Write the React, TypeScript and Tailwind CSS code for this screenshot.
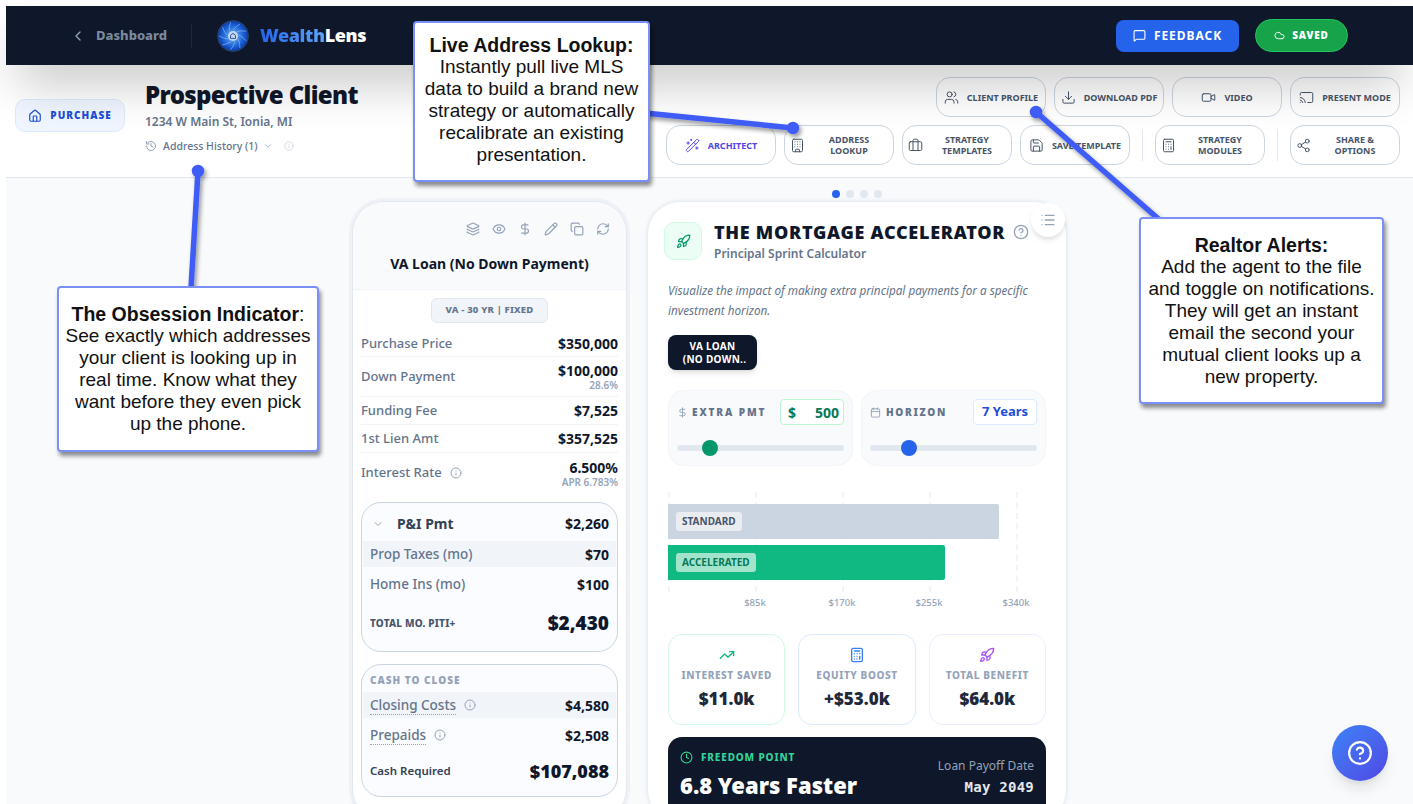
import React from "react";
import {
  ChevronLeft, MessageSquare, Cloud, Home, History, ChevronDown, Info, Users, Download, Video, Cast,
  WandSparkles, Building, Briefcase, Save, Calculator, Share2, Layers, Eye, DollarSign, Pencil, Copy,
  RefreshCw, Rocket, CircleHelp, List, Calendar, TrendingUp, Clock,
} from "lucide-react";

const Logo = () => {
  const blades = Array.from({ length: 9 }, (_, i) => i * 40);
  return (
    <svg width="32" height="32" viewBox="0 0 32 32">
      <defs>
        <radialGradient id="lg" cx="50%" cy="50%" r="50%">
          <stop offset="0%" stopColor="#b5d0f0" />
          <stop offset="40%" stopColor="#3d86e4" />
          <stop offset="75%" stopColor="#1658d0" />
          <stop offset="100%" stopColor="#0e3a94" />
        </radialGradient>
      </defs>
      <circle cx="16" cy="16" r="15.5" fill="url(#lg)" stroke="#33415f" strokeWidth="0.8" />
      {blades.map((a) => (
        <path key={a} d="M16 10 Q19 6 23 4" fill="none" stroke="#8fbcf0" strokeOpacity="0.7" strokeWidth="0.9" transform={`rotate(${a} 16 16)`} />
      ))}
      <circle cx="16" cy="16" r="5" fill="#c3d6ec" />
      <path d="M13.5 18.4v-3l2.5-2 2.5 2v3z" fill="none" stroke="#2a5aa8" strokeWidth="1" />
    </svg>
  );
};

const TopBtn = ({ icon: I, children, active, split }: any) => (
  <button className={`flex h-[40px] w-[110px] shrink-0 items-center whitespace-nowrap rounded-[14px] border border-[#cbd5e1] bg-white/40 text-[9px] font-bold leading-[11px] ${active ? "text-[#4f46e5]" : "text-[#475569]"} ${split ? "px-[5px]" : "justify-center gap-[8px]"}`}>
    <I size={15} strokeWidth={1.6} className="shrink-0" />
    <span className={split ? "flex-1 pl-[5px] text-center" : ""}>{children}</span>
  </button>
);

const Row = ({ label, value, sub, info, cls }: any) => (
  <div className={`flex items-center justify-between border-b border-[#f1f5f9] ${cls}`}>
    <span className="flex items-center gap-[8px] text-[13px] font-medium text-[#64748b]">
      {label}
      {info && <Info size={12} className="text-[#94a3b8]" />}
    </span>
    <span className="flex flex-col items-end">
      <span className="text-[14px] font-bold leading-[18px] text-[#0f172a]">{value}</span>
      {sub && <span className="text-[10px] font-semibold leading-[11px] text-[#94a3b8]">{sub}</span>}
    </span>
  </div>
);

const SubRow = ({ label, value, hl, info, dotted }: any) => (
  <div className={`mx-[1px] flex h-[26px] items-center justify-between px-[7px] ${hl ? "bg-[#f1f5f9]" : ""}`}>
    <span className="flex items-center gap-[8px] text-[13.5px] font-medium text-[#64748b]">
      <span className={dotted ? "border-b border-dotted border-[#94a3b8] leading-[18px]" : ""}>{label}</span>
      {info && <Info size={12} className="text-[#94a3b8]" />}
    </span>
    <span className="text-[14px] font-bold text-[#0f172a]">{value}</span>
  </div>
);

const Stat = ({ icon: I, color, border, label, value }: any) => (
  <div className={`flex h-[91px] flex-col items-center rounded-[14px] border bg-white pt-[12px] ${border}`}>
    <I size={16} className={color} />
    <div className="mt-[5px] whitespace-nowrap text-[10px] font-extrabold leading-[14px] tracking-[0.06em] text-[#94a3b8]">{label}</div>
    <div className="mt-[5px] text-[17px] font-black leading-[24px] text-[#1e293b]">{value}</div>
  </div>
);

const Callout = ({ cls, title, colon, lines }: any) => (
  <div className={`absolute z-30 flex flex-col items-center justify-center rounded-[4px] border-2 border-[#7b90f7] bg-white text-center text-[19px] leading-[22px] text-[#111] shadow-[2px_4px_4px_rgba(0,0,0,0.45)] [font-family:'Liberation_Sans',Arial,sans-serif] ${cls}`}>
    <div className="whitespace-nowrap text-[19.5px]"><b>{title}</b>{colon}</div>
    {lines.map((l: string) => <div key={l} className="whitespace-nowrap">{l}</div>)}
  </div>
);

const Slider = ({ thumb, left }: any) => (
  <div className="relative mt-[20px] h-[6px] rounded-full bg-[#e2e8f0]">
    <div className={`absolute top-[-5px] h-[16px] w-[16px] rounded-full ${thumb} ${left}`} />
  </div>
);

export default function App() {
  return (
    <div className="relative h-[804px] w-[1413px] overflow-hidden bg-white pl-[6px] pt-[6px] [font-family:'Noto_Sans',sans-serif]">
      <div className="flex h-[798px] flex-col bg-[#f8fafc]">
        <header className="relative z-10 flex h-[59px] shrink-0 items-center justify-between bg-[#0f172a] pl-[64px] pr-[65px] shadow-[0_25px_50px_-12px_rgba(0,0,0,0.3)]">
          <div className="flex items-center">
            <ChevronLeft size={16} className="text-[#94a3b8]" />
            <span className="ml-[10px] text-[13px] font-extrabold text-[#7b899d]">Dashboard</span>
            <div className="ml-[24px] h-[24px] w-px bg-[#1e293b]" />
            <div className="ml-[25px]"><Logo /></div>
            <span className="ml-[11px] text-[18px] font-black tracking-[-0.02em]">
              <span className="bg-gradient-to-r from-[#2563eb] to-[#60a5fa] bg-clip-text text-transparent">Wealth</span>
              <span className="text-white">Lens</span>
            </span>
          </div>
          <div className="flex items-center gap-[16px]">
            <button className="flex h-[32px] w-[123px] items-center justify-center gap-[8px] rounded-[8px] bg-[#2563eb] text-[12px] font-bold tracking-[0.08em] text-white">
              <MessageSquare size={13} /> FEEDBACK
            </button>
            <button className="flex h-[33px] w-[93px] items-center justify-center gap-[7px] rounded-full border border-[#22c55e] bg-[#16a34a] text-[10px] font-black tracking-[0.08em] text-white">
              <Cloud size={11} /> SAVED
            </button>
          </div>
        </header>

        <div className="flex h-[113px] shrink-0 justify-between border-b border-[#e2e8f0] bg-white pl-[9px] pr-[13px]">
          <div className="flex items-start">
            <div className="mt-[34px] flex h-[33px] w-[110px] items-center justify-center gap-[8px] rounded-[10px] border border-[#dbeafe] bg-[#eff6ff] text-[10px] font-black tracking-[0.1em] text-[#1d4ed8]">
              <Home size={14} /> PURCHASE
            </div>
            <div className="ml-[20px] pt-[13px]">
              <div className="text-[24px] font-black leading-[33px] tracking-[-0.027em] text-[#0f172a]">Prospective Client</div>
              <div className="mt-[3px] text-[12px] font-semibold leading-[16px] text-[#64748b]">1234 W Main St, Ionia, MI</div>
              <div className="mt-[8px] flex items-center text-[10.5px] font-medium leading-[16px] text-[#64748b]">
                <History size={12} className="text-[#94a3b8]" />
                <span className="ml-[6px]">Address History (1)</span>
                <ChevronDown size={10} className="ml-[5px] text-[#94a3b8]" />
                <Info size={10} className="ml-[11px] text-[#cbd5e1]" />
              </div>
            </div>
          </div>
          <div className="flex flex-col items-end gap-[8px] pt-[12px]">
            <div className="flex gap-[8px]">
              <TopBtn icon={Users}>CLIENT PROFILE</TopBtn>
              <TopBtn icon={Download}>DOWNLOAD PDF</TopBtn>
              <TopBtn icon={Video}>VIDEO</TopBtn>
              <TopBtn icon={Cast}>PRESENT MODE</TopBtn>
            </div>
            <div className="flex items-center gap-[8px]">
              <TopBtn icon={WandSparkles} active>ARCHITECT</TopBtn>
              <TopBtn icon={Building} split>ADDRESS<br />LOOKUP</TopBtn>
              <TopBtn icon={Briefcase} split>STRATEGY<br />TEMPLATES</TopBtn>
              <TopBtn icon={Save}>SAVE TEMPLATE</TopBtn>
              <div className="mx-[4px] h-[32px] w-px bg-[#e2e8f0]" />
              <TopBtn icon={Calculator} split>STRATEGY<br />MODULES</TopBtn>
              <div className="mx-[4px] h-[32px] w-px bg-[#e2e8f0]" />
              <TopBtn icon={Share2} split>SHARE &amp;<br />OPTIONS</TopBtn>
            </div>
          </div>
        </div>

        <main className="flex min-h-0 flex-1 items-start gap-[21px] overflow-hidden pl-[346px] pt-[23px]">
          <section className="h-[620px] w-[275px] shrink-0 rounded-[32px] border border-[#e2e8f0] bg-white shadow-[0_0_0_3px_#eef2f7]">
            <div className="h-[88px] rounded-t-[32px] border-b border-[#f1f5f9] bg-[#f8fafc] pt-[20px]">
              <div className="flex justify-end gap-[12px] pr-[16px] text-[#94a3b8]">
                {[Layers, Eye, DollarSign, Pencil, Copy, RefreshCw].map((I, i) => <I key={i} size={14} />)}
              </div>
              <div className="mt-[18px] text-center text-[14px] font-bold leading-[20px] text-[#0f172a]">VA Loan (No Down Payment)</div>
            </div>
            <div className="px-[8px]">
              <div className="mx-auto mt-[8px] flex h-[25px] w-[117px] items-center justify-center rounded-[6px] border border-[#e2e8f0] bg-[#f1f5f9] text-[9.5px] font-extrabold tracking-[0.02em] text-[#64748b]">VA - 30 YR | FIXED</div>
              <div className="mt-[8px]">
                <Row label="Purchase Price" value="$350,000" cls="h-[26px]" />
                <Row label="Down Payment" value="$100,000" sub="28.6%" cls="h-[40px]" />
                <Row label="Funding Fee" value="$7,525" cls="h-[28px]" />
                <Row label="1st Lien Amt" value="$357,525" cls="h-[28px]" />
                <Row label="Interest Rate" info value="6.500%" sub="APR 6.783%" cls="h-[40px] !border-b-0" />
              </div>
              <div className="mt-[9px] h-[150px] rounded-[20px] border border-[#cbd5e1] bg-[#fbfcff]">
                <div className="flex h-[38px] items-center justify-between pl-[10px] pr-[8px] pt-[3px]">
                  <span className="flex items-center text-[14px] font-bold text-[#334155]">
                    <ChevronDown size={12} className="text-[#94a3b8]" />
                    <span className="ml-[13px]">P&amp;I Pmt</span>
                  </span>
                  <span className="text-[14px] font-bold text-[#0f172a]">$2,260</span>
                </div>
                <SubRow label="Prop Taxes (mo)" value="$70" hl />
                <div className="h-[4px]" />
                <SubRow label="Home Ins (mo)" value="$100" />
                <div className="mt-[12px] flex h-[28px] items-center justify-between px-[8px]">
                  <span className="text-[10px] font-extrabold tracking-[0.02em] text-[#475569]">TOTAL MO. PITI+</span>
                  <span className="text-[19px] font-black text-[#0f172a]">$2,430</span>
                </div>
              </div>
              <div className="mt-[12px] h-[133px] rounded-[20px] border border-[#cbd5e1] bg-[#fbfcff]">
                <div className="h-[27px] pl-[8px] pt-[9px] text-[10px] font-black leading-[12px] tracking-[0.1em] text-[#94a3b8]">CASH TO CLOSE</div>
                <SubRow label="Closing Costs" value="$4,580" hl info dotted />
                <div className="h-[4px]" />
                <SubRow label="Prepaids" value="$2,508" info dotted />
                <div className="mt-[8px] flex h-[30px] items-center justify-between px-[8px]">
                  <span className="text-[11.5px] font-semibold text-[#334155]">Cash Required</span>
                  <span className="text-[18px] font-black text-[#0f172a]">$107,088</span>
                </div>
              </div>
            </div>
          </section>

          <div className="relative w-[418px] shrink-0">
            <div className="absolute left-[184px] top-[-11px] flex gap-[6px]">
              <div className="h-[8px] w-[8px] rounded-full bg-[#2563eb]" />
              <div className="h-[8px] w-[8px] rounded-full bg-[#e2e8f0]" />
              <div className="h-[8px] w-[8px] rounded-full bg-[#e2e8f0]" />
              <div className="h-[8px] w-[8px] rounded-full bg-[#e2e8f0]" />
            </div>
            <div className="absolute right-[1px] top-[2px] z-10 flex h-[34px] w-[34px] items-center justify-center rounded-full bg-white text-[#94a3b8] shadow-md"><List size={16} /></div>
            <section className="relative mt-[1px] h-[620px] rounded-[32px] bg-white px-[20px] pt-[20px] shadow-[0_0_4px_rgba(148,163,184,0.35)]">
              <div className="-ml-[4px] flex">
                <div className="flex h-[38px] w-[38px] items-center justify-center rounded-[10px] border border-[#d1fae5] bg-[#ecfdf5] text-[#059669]"><Rocket size={15} /></div>
                <div className="ml-[12px]">
                  <div className="flex items-center whitespace-nowrap text-[18px] font-black leading-[20px] tracking-[0.04em] text-[#0f172a]">
                    THE MORTGAGE ACCELERATOR
                    <CircleHelp size={16} className="ml-[8px] text-[#94a3b8]" />
                  </div>
                  <div className="mt-[3px] text-[12px] font-semibold leading-[18px] text-[#64748b]">Principal Sprint Calculator</div>
                </div>
              </div>
              <p className="mt-[17px] whitespace-nowrap text-[11.7px] italic leading-[20px] text-[#64748b]">Visualize the impact of making extra principal payments for a specific<br />investment horizon.</p>
              <div className="mt-[15px] flex h-[35px] w-[89px] flex-col items-center justify-center rounded-[8px] bg-[#0f172a] text-[10px] font-bold leading-[13px] tracking-[0.03em] text-white shadow-md">
                <div>VA LOAN</div>
                <div className="pl-[4px]">(NO DOWN..</div>
              </div>
              <div className="mt-[20px] grid grid-cols-2 gap-[8px]">
                <div className="h-[76px] rounded-[16px] border border-[#f1f5f9] bg-[#f8fafc] px-[8px] pt-[8px]">
                  <div className="flex items-center justify-between">
                    <span className="flex items-center gap-[4px] whitespace-nowrap text-[10px] font-black tracking-[0.19em] text-[#64748b]"><DollarSign size={11} className="text-[#94a3b8]" /> EXTRA PMT</span>
                    <span className="flex h-[26px] w-[64px] items-center justify-between rounded-[4px] border border-[#bbf7d0] bg-white pl-[7px] pr-[4px] text-[14px] font-bold text-[#047857]"><span>$</span><span>500</span></span>
                  </div>
                  <Slider thumb="bg-[#059669]" left="left-[25px]" />
                </div>
                <div className="h-[76px] rounded-[16px] border border-[#f1f5f9] bg-[#f8fafc] px-[8px] pt-[8px]">
                  <div className="flex items-center justify-between">
                    <span className="flex items-center gap-[5px] whitespace-nowrap text-[10px] font-black tracking-[0.17em] text-[#64748b]"><Calendar size={11} className="text-[#94a3b8]" /> HORIZON</span>
                    <span className="flex h-[26px] w-[64px] items-center justify-center rounded-[4px] border border-[#dbeafe] bg-white text-[13px] font-bold text-[#1d4ed8]">7 Years</span>
                  </div>
                  <Slider thumb="bg-[#2563eb]" left="left-[31px]" />
                </div>
              </div>

              <div className="relative mt-[26px] h-[100px] w-[349px]">
                {[0, 87, 174, 261, 348].map((x) => (
                  <div key={x} style={{ left: x }} className="absolute inset-y-0 border-l-2 border-dashed border-[#f1f5f9]" />
                ))}
                <div className="relative flex h-full flex-col gap-[6px] pt-[12px]">
                  <div className="flex h-[35px] w-[331px] items-center rounded-r-[2px] bg-[#cbd5e1] pl-[8px]">
                    <span className="rounded-[3px] bg-[#e9edf2] px-[6px] text-[10px] font-bold leading-[19px] text-[#475569]">STANDARD</span>
                  </div>
                  <div className="flex h-[35px] w-[277px] items-center rounded-r-[2px] bg-[#10b981] pl-[8px]">
                    <span className="rounded-[3px] bg-[#a2e4cb] px-[6px] text-[10px] font-bold leading-[19px] text-[#047857]">ACCELERATED</span>
                  </div>
                </div>
              </div>
              <div className="relative h-[12px] w-[378px] text-[9.5px] font-medium leading-[12px] text-[#94a3b8]">
                {[["$85k", 87], ["$170k", 174], ["$255k", 261], ["$340k", 348]].map(([t, x]) => (
                  <span key={t as string} style={{ left: x as number }} className="absolute top-[5px] -translate-x-1/2">{t}</span>
                ))}
              </div>

              <div className="mt-[30px] grid grid-cols-3 gap-[13px]">
                <Stat icon={TrendingUp} color="text-[#10b981]" border="border-[#d1fae5]" label="INTEREST SAVED" value="$11.0k" />
                <Stat icon={Calculator} color="text-[#3b82f6]" border="border-[#dbeafe]" label="EQUITY BOOST" value="+$53.0k" />
                <Stat icon={Rocket} color="text-[#a855f7]" border="border-[#f3e8ff]" label="TOTAL BENEFIT" value="$64.0k" />
              </div>

              <div className="mt-[12px] flex h-[90px] justify-between rounded-[14px] bg-[#0f172a] px-[12px] pt-[12px]">
                <div>
                  <div className="flex items-center gap-[8px] text-[10px] font-extrabold leading-[16px] tracking-[0.086em] text-[#34d399]"><Clock size={13} className="text-[#34d399]" /> FREEDOM POINT</div>
                  <div className="mt-[5px] text-[22px] font-black leading-[30px] text-white">6.8 Years Faster</div>
                </div>
                <div className="pt-[8px] text-right">
                  <div className="text-[12px] leading-[18px] text-[#94a3b8]">Loan Payoff Date</div>
                  <div className="mt-[3px] text-[14px] font-bold leading-[18px] tracking-[0.25px] text-[#e2e8f0] [font-family:'DejaVu_Sans_Mono',monospace]">May 2049</div>
                </div>
              </div>
            </section>
          </div>
        </main>
      </div>

      <div className="absolute left-[1332px] top-[725px] z-20 flex h-[56px] w-[56px] items-center justify-center rounded-full bg-gradient-to-br from-[#3b82f6] to-[#4f46e5] text-white shadow-lg">
        <CircleHelp size={26} />
      </div>

      <svg className="pointer-events-none absolute inset-0 z-20" width="1413" height="804" viewBox="0 0 1413 804">
        <defs>
          <filter id="ds" x="-20%" y="-20%" width="140%" height="140%">
            <feDropShadow dx="2" dy="3" stdDeviation="2" floodColor="#000" floodOpacity="0.4" />
          </filter>
        </defs>
        <g stroke="#3f5cf7" strokeWidth="5.5" fill="#3f5cf7" filter="url(#ds)">
          <path d="M198 171 L191 288" />
          <circle cx="198" cy="171" r="3.5" />
          <path d="M645 113 L793 128" />
          <circle cx="793" cy="128" r="3.5" />
          <path d="M1036 112 L1162 222" />
          <circle cx="1036" cy="112" r="3.5" />
        </g>
      </svg>

      <Callout cls="left-[57px] top-[286px] h-[166px] w-[262px] pb-[1px]" title="The Obsession Indicator" colon=":" lines={["See exactly which addresses", "your client is looking up in", "real time. Know what they", "want before they even pick", "up the phone."]} />
      <Callout cls="left-[413px] top-[21px] h-[161px] w-[237px] pb-[3px]" title="Live Address Lookup:" lines={["Instantly pull live MLS", "data to build a brand new", "strategy or automatically", "recalibrate an existing", "presentation."]} />
      <Callout cls="left-[1139px] top-[217px] h-[187px] w-[245px]" title="Realtor Alerts:" lines={["Add the agent to the file", "and toggle on notifications.", "They will get an instant", "email the second your", "mutual client looks up a", "new property."]} />
    </div>
  );
}
